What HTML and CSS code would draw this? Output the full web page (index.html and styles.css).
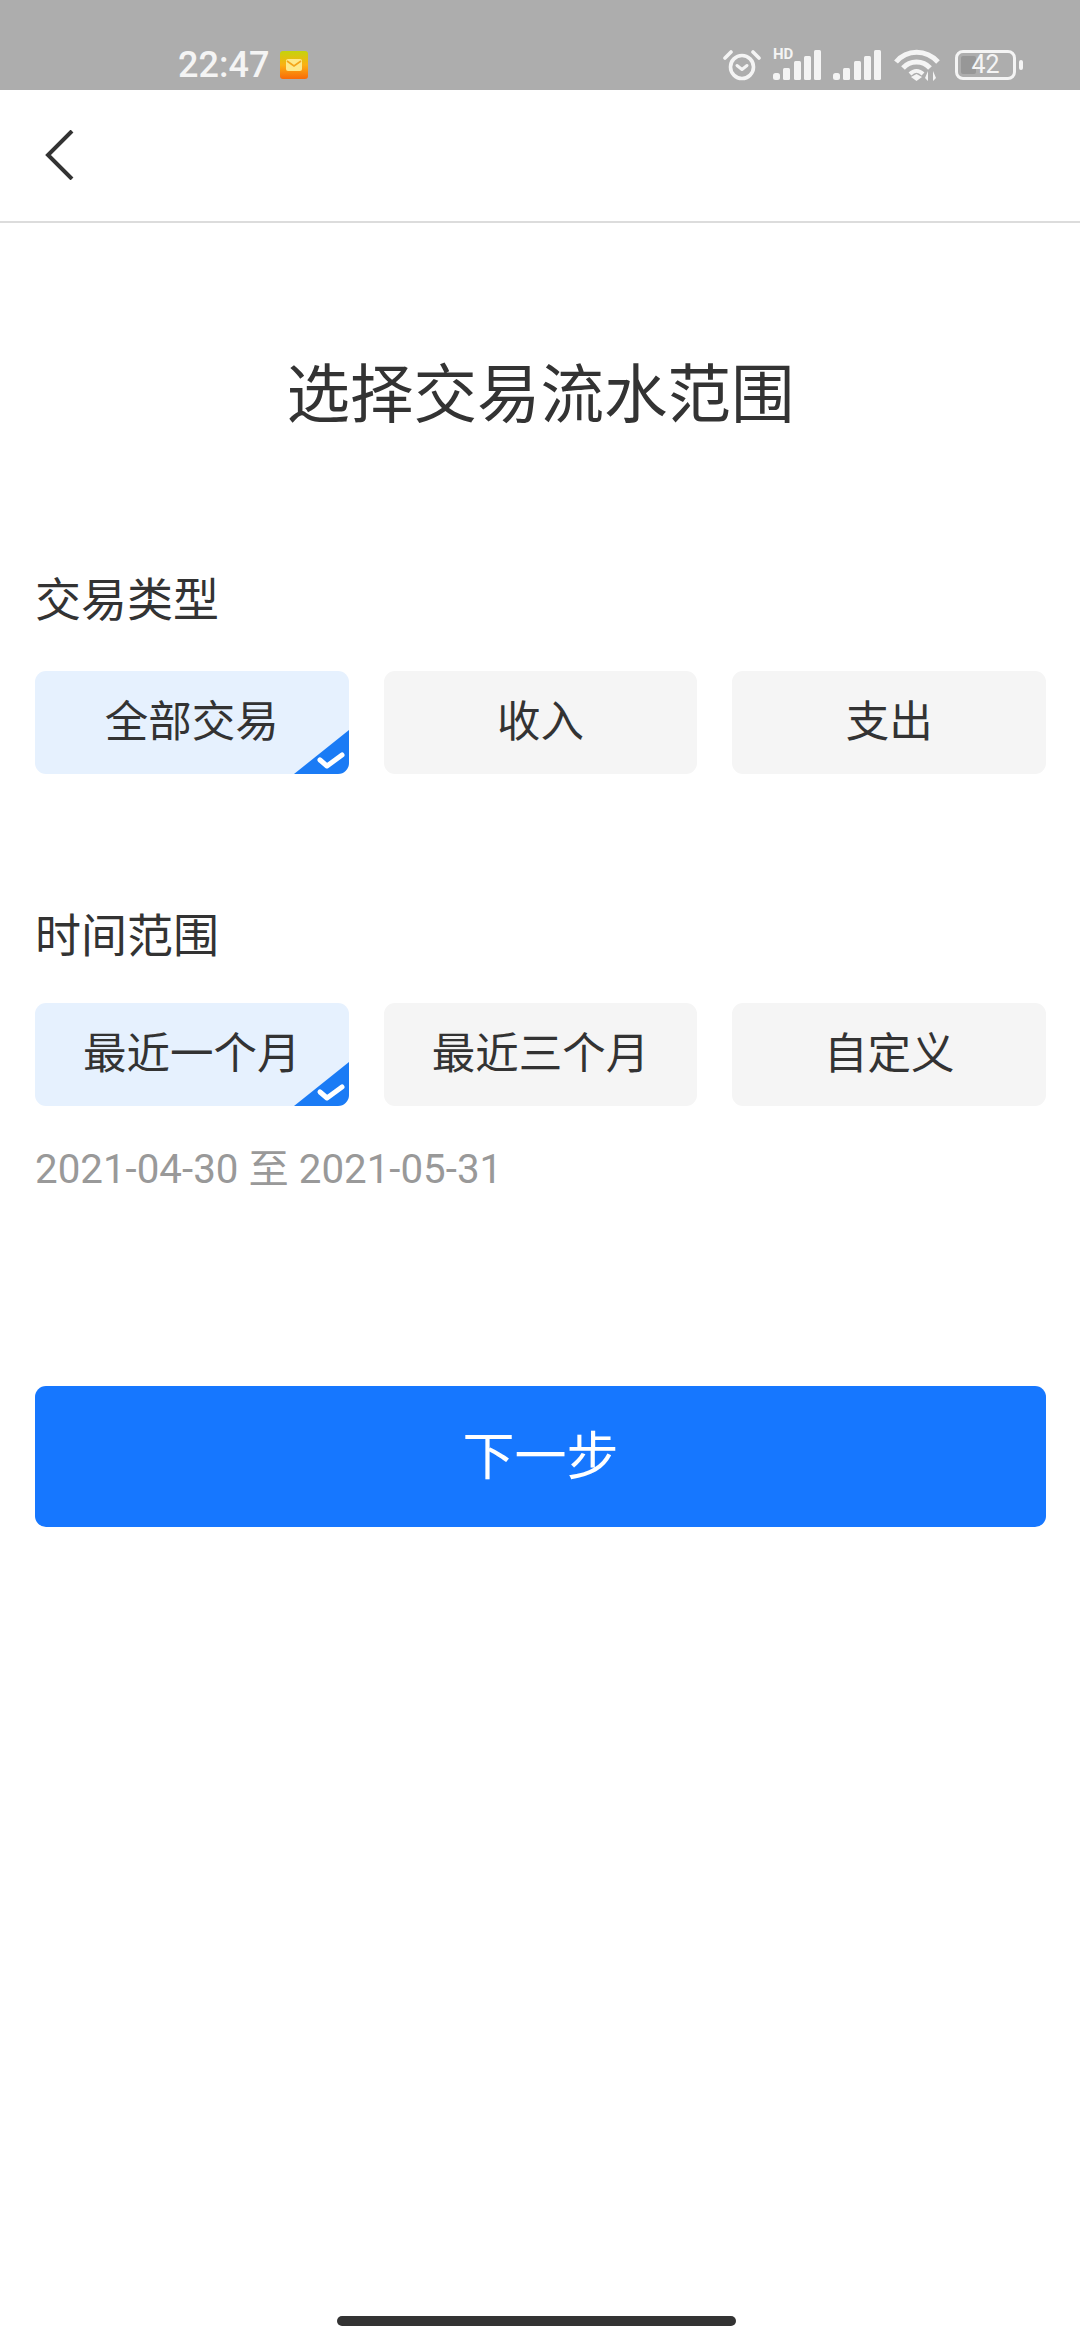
FILE: index.html
```html
<!DOCTYPE html>
<html lang="zh-CN">
<head>
    <meta charset="UTF-8">
    <meta name="viewport" content="width=device-width, initial-scale=1.0">
    <title>选择交易流水范围</title>
    <link rel="stylesheet" href="styles.css">
</head>
<body>
<div class="page">
    <div class="statusbar">
        <span class="time">22:47</span>
        <svg class="mail" width="28" height="28" viewBox="0 0 28 28">
            <defs>
                <linearGradient id="mailbg" x1="0" y1="0" x2="0" y2="1">
                    <stop offset="0" stop-color="#c4d40c"/>
                    <stop offset="0.5" stop-color="#fbb013"/>
                    <stop offset="1" stop-color="#f96a08"/>
                </linearGradient>
            </defs>
            <rect width="28" height="28" rx="3" fill="url(#mailbg)"/>
            <rect x="6" y="8" width="16" height="12" rx="2" fill="#fde98a"/>
            <path d="M7 10l7 5 7-5" fill="none" stroke="#f3a51a" stroke-width="1.6"/>
        </svg>
        <div class="status-icons">
            <svg width="38" height="32" viewBox="0 0 38 32" fill="none" stroke="#f4f4f4">
                <circle cx="19" cy="18" r="11.5" stroke-width="3.6"/>
                <path d="M14 16.5l5 4 5-4" stroke-width="3" stroke-linecap="round" stroke-linejoin="round"/>
                <path d="M2 9l6-6M36 9l-6-6" stroke-width="3.6" stroke-linecap="round"/>
            </svg>
            <div class="signal">
                <span class="hd">HD</span>
                <svg width="48" height="32" viewBox="0 0 48 32" fill="#f4f4f4">
                    <rect x="0" y="24" width="7" height="7" rx="2.5"/>
                    <rect x="10" y="19" width="7" height="12" rx="1.5"/>
                    <rect x="21" y="12" width="7" height="19" rx="1.5"/>
                    <rect x="31" y="7" width="7" height="24" rx="1.5"/>
                    <rect x="41" y="1" width="7" height="30" rx="1.5"/>
                </svg>
            </div>
            <svg width="48" height="32" viewBox="0 0 48 32" fill="#f4f4f4">
                <rect x="0" y="24" width="7" height="7" rx="2.5"/>
                <rect x="10" y="19" width="7" height="12" rx="1.5"/>
                <rect x="21" y="12" width="7" height="19" rx="1.5"/>
                <rect x="31" y="7" width="7" height="24" rx="1.5"/>
                <rect x="41" y="1" width="7" height="30" rx="1.5"/>
            </svg>
            <svg width="48" height="34" viewBox="0 0 48 34" fill="none" stroke="#f4f4f4" stroke-width="5">
                <path d="M3 14C14 1 33 1 45 14"/>
                <path d="M10 20C17 12 30 12 37 20"/>
                <path d="M17 26C21 22 26 22 30 26" stroke-width="4"/>
                <path d="M18 29l5.500-3 5.500 3-5.500 4z" fill="#f4f4f4" stroke="none"/>
                <path d="M32 30l3-7v10zM43 30l-3-7v10z" fill="#f4f4f4" stroke="none"/>
            </svg>
            <div class="battery">
                <div class="battery-body">
                    <div class="battery-fill"></div>
                    <span class="battery-num">42</span>
                </div>
                <div class="battery-nub"></div>
            </div>
        </div>
    </div>

    <div class="topbar">
        <svg width="34" height="50" viewBox="0 0 34 50" fill="none" stroke="#333" stroke-width="4">
            <path d="M28 1L4 25l24 24"/>
        </svg>
    </div>

    <div class="content">
        <h1 class="title">选择交易流水范围</h1>

        <div class="label first">交易类型</div>
        <div class="chips">
            <div class="chip selected">全部交易
                <svg class="corner" width="55" height="44" viewBox="0 0 55 44">
                    <path d="M0 44L55 0V44z" fill="#1a7bf5"/>
                    <path d="M26 30l7 6 15-11" fill="none" stroke="#fff" stroke-width="5" stroke-linecap="round" stroke-linejoin="round"/>
                </svg>
            </div>
            <div class="chip">收入</div>
            <div class="chip">支出</div>
        </div>

        <div class="label second">时间范围</div>
        <div class="chips">
            <div class="chip selected">最近一个月
                <svg class="corner" width="55" height="44" viewBox="0 0 55 44">
                    <path d="M0 44L55 0V44z" fill="#1a7bf5"/>
                    <path d="M26 30l7 6 15-11" fill="none" stroke="#fff" stroke-width="5" stroke-linecap="round" stroke-linejoin="round"/>
                </svg>
            </div>
            <div class="chip">最近三个月</div>
            <div class="chip">自定义</div>
        </div>
        <div class="range">2021-04-30 至 2021-05-31</div>

        <button class="next">下一步</button>
    </div>

    <div class="homebar"></div>
</div>
</body>
</html>
```

FILE: styles.css
```css
* {
    box-sizing: border-box;
}
body {
    margin: 0;
    background-color: #fff;
    color: #333;
    font-family: Roboto, "Noto Sans CJK SC", sans-serif;
}
.page {
    width: 1080px;
    height: 2340px;
    display: flex;
    flex-direction: column;
    overflow: hidden;
}
.statusbar {
    height: 90px;
    flex: none;
    background-color: #adadad;
    display: flex;
    align-items: center;
    padding: 40px 0 0 178px;
    color: #f4f4f4;
}
.time {
    font-size: 36px;
    font-weight: 500;
    line-height: 44px;
}
.mail {
    margin-left: 11px;
}
.status-icons {
    margin-left: auto;
    margin-right: 57px;
    display: flex;
    align-items: center;
    gap: 12px;
}
.signal {
    position: relative;
}
.signal svg {
    display: block;
}
.hd {
    position: absolute;
    left: 0;
    top: -2px;
    font-size: 15px;
    font-weight: 700;
    line-height: 15px;
}
.battery {
    display: flex;
    align-items: center;
    gap: 3px;
    margin-left: 2px;
}
.battery-body {
    width: 61px;
    height: 30px;
    border: 3.5px solid #f4f4f4;
    border-radius: 8px;
    position: relative;
    display: flex;
    align-items: center;
    justify-content: center;
}
.battery-fill {
    position: absolute;
    left: 3px;
    top: 3px;
    bottom: 3px;
    width: 15px;
    background-color: #979797;
    border-radius: 2px;
}
.battery-num {
    position: relative;
    font-size: 25px;
    line-height: 24px;
}
.battery-nub {
    width: 4px;
    height: 10px;
    background-color: #f4f4f4;
    border-radius: 2px;
}
.topbar {
    height: 133px;
    flex: none;
    border-bottom: 2px solid #dcdcdc;
    display: flex;
    align-items: center;
    padding: 0 0 2px 44px;
}
.content {
    padding: 0 34px 0 35px;
}
.title {
    margin: 128px 0 0;
    font-size: 63.5px;
    font-weight: 400;
    line-height: 90px;
    text-align: center;
}
.label {
    font-size: 46px;
    line-height: 60px;
}
.label.first {
    margin: 129px 0 41px;
}
.label.second {
    margin: 132px 0 37px;
}
.chips {
    display: grid;
    grid-template-columns: repeat(3, 1fr);
    gap: 35px;
}
.chip {
    height: 103px;
    position: relative;
    overflow: hidden;
    display: flex;
    align-items: center;
    justify-content: center;
    padding-bottom: 9px;
    background-color: #f5f5f5;
    border-radius: 11px;
    font-size: 43.5px;
}
.chip.selected {
    background-color: #e6f1fe;
}
.corner {
    position: absolute;
    right: 0;
    bottom: 0;
}
.range {
    margin-top: 39px;
    font-size: 40.3px;
    line-height: 50px;
    color: #999;
}
.next {
    display: block;
    width: 100%;
    height: 141px;
    margin-top: 191px;
    padding: 0 0 9px;
    border: none;
    border-radius: 11px;
    background-color: #1677ff;
    color: #fff;
    font-family: inherit;
    font-size: 52px;
}
.homebar {
    width: 399px;
    height: 10px;
    margin: auto 0 14px 337px;
    background-color: #333;
    border-radius: 5px;
}
```
